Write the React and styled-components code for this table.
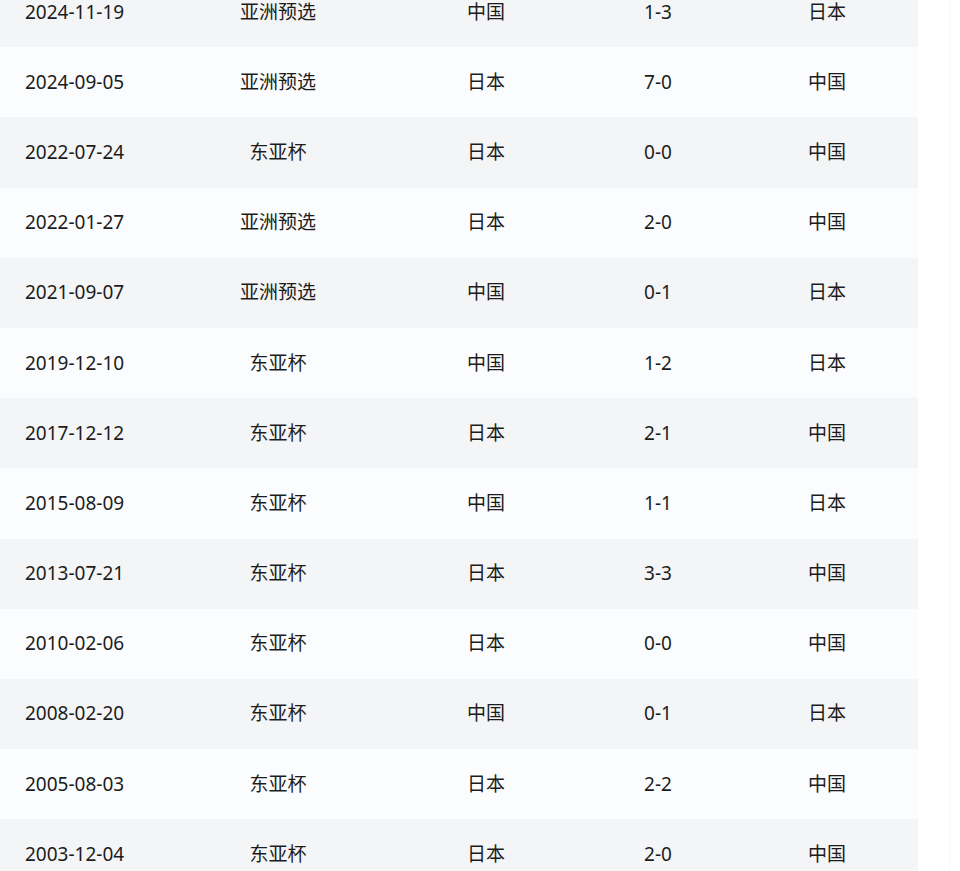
import React from 'react';
import styled, { createGlobalStyle } from 'styled-components';

const GlobalStyle = createGlobalStyle`
  html, body {
    margin: 0;
    padding: 0;
    background: #ffffff;
  }
  body {
    font-family: "Noto Sans", "Noto Sans CJK SC", sans-serif;
    color: #222;
  }
`;

const Page = styled.div`
  width: 960px;
  height: 871px;
  overflow: hidden;
  display: flex;
  background: #ffffff;
`;

const TableWrap = styled.div`
  width: 918px;
  margin-top: -23px;
  flex-shrink: 0;
`;

const Gutter = styled.div`
  width: 31px;
  border-right: 1px solid #f9fafb;
  flex-shrink: 0;
`;

const Row = styled.div`
  display: grid;
  grid-template-columns: 170px 216px 200px 144px 188px;
  height: 70.2px;
  align-items: center;
  background: ${p => (p.$shaded ? '#f4f5f7' : '#fbfcfe')};
  font-size: 19px;
  line-height: 1;
`;

// digits come from Noto Sans, hanzi from the CJK face; the CJK face sits a
// little low next to the digits so lift it a couple of pixels
const Cell = styled.div`
  text-align: ${p => (p.$left ? 'left' : 'center')};
  padding-left: ${p => p.$indent || '0'};
  padding-bottom: ${p => (p.$cjk ? '4px' : '0')};
  font-family: ${p => (p.$cjk ? '"Noto Sans CJK SC", sans-serif' : 'inherit')};
  color: #1c1c1c;
  white-space: nowrap;
`;

const matches = [
  ['2024-11-19', '亚洲预选', '中国', '1-3', '日本'],
  ['2024-09-05', '亚洲预选', '日本', '7-0', '中国'],
  ['2022-07-24', '东亚杯', '日本', '0-0', '中国'],
  ['2022-01-27', '亚洲预选', '日本', '2-0', '中国'],
  ['2021-09-07', '亚洲预选', '中国', '0-1', '日本'],
  ['2019-12-10', '东亚杯', '中国', '1-2', '日本'],
  ['2017-12-12', '东亚杯', '日本', '2-1', '中国'],
  ['2015-08-09', '东亚杯', '中国', '1-1', '日本'],
  ['2013-07-21', '东亚杯', '日本', '3-3', '中国'],
  ['2010-02-06', '东亚杯', '日本', '0-0', '中国'],
  ['2008-02-20', '东亚杯', '中国', '0-1', '日本'],
  ['2005-08-03', '东亚杯', '日本', '2-2', '中国'],
  ['2003-12-04', '东亚杯', '日本', '2-0', '中国'],
];

export default function App() {
  return (
    <>
      <GlobalStyle />
      <Page>
        <TableWrap>
          {matches.map((m, i) => (
            <Row key={m[0]} $shaded={i % 2 === 0}>
              <Cell $left $indent="25px">{m[0]}</Cell>
              <Cell $cjk>{m[1]}</Cell>
              <Cell $cjk>{m[2]}</Cell>
              <Cell>{m[3]}</Cell>
              <Cell $cjk $indent="6px">{m[4]}</Cell>
            </Row>
          ))}
        </TableWrap>
        <Gutter />
      </Page>
    </>
  );
}
